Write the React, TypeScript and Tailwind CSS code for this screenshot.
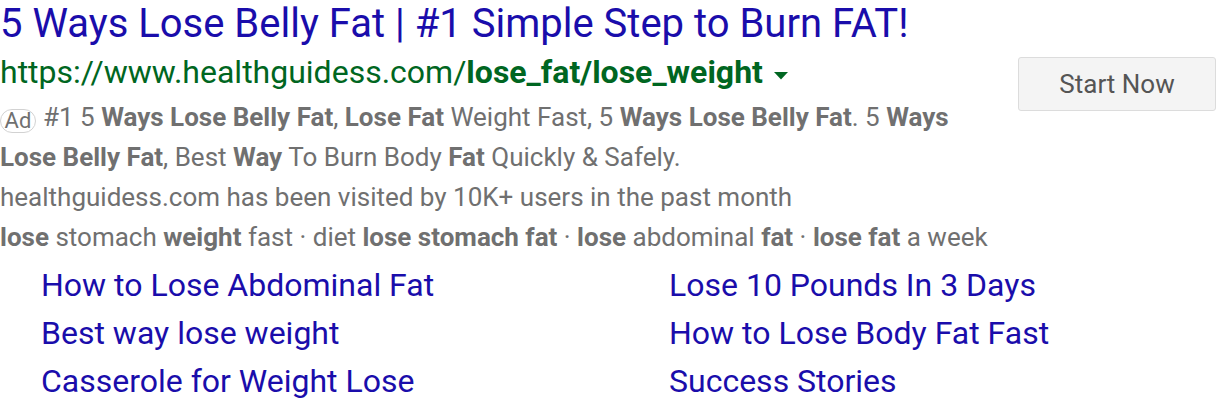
export default function App() {
  const sitelinks = [
    'How to Lose Abdominal Fat',
    'Lose 10 Pounds In 3 Days',
    'Best way lose weight',
    'How to Lose Body Fat Fast',
    'Casserole for Weight Lose',
    'Success Stories',
  ]

  return (
    <div className="w-[1216px] h-[410px] overflow-hidden bg-white font-['Roboto',sans-serif]">
      <div className="flex items-start">
        <div className="flex-1">
          <h1 className="pt-[2px] text-[40px] leading-[44px] text-[#1a0dab] whitespace-nowrap">
            5 Ways Lose Belly Fat | #1 Simple Step to Burn FAT!
          </h1>
          <div className="flex items-center h-[40px] mt-[6px] text-[32px] text-[#006621] whitespace-nowrap">
            <span>https://www.healthguidess.com/</span>
            <span className="font-bold">lose_fat/lose_weight</span>
            <svg className="ml-[11px] mt-[8px]" width="14" height="8" viewBox="0 0 14 8">
              <path d="M0 0 L14 0 L7 7.5 Z" fill="#006621" />
            </svg>
          </div>
        </div>
        <button className="mt-[57px] mb-[-19px] w-[198px] h-[54px] rounded-[3px] border border-[#dcdcdc] bg-[#f4f4f4] text-[26px] text-[#555555]">
          Start Now
        </button>
      </div>

      <div className="mt-[5px] w-[980px] text-[26px] leading-[40px] text-[#707070]">
        <p>
          <span className="inline-flex items-center justify-center align-[-2px] w-[36px] h-[24px] mr-[7px] rounded-[12px] border border-[#d2d2d2] text-[22px] leading-none">
            Ad
          </span>
          #1 5 <b>Ways Lose Belly Fat</b>, <b>Lose Fat</b> Weight Fast, 5 <b>Ways Lose Belly Fat</b>. 5{' '}
          <b>Ways</b> <b>Lose Belly Fat</b>, Best <b>Way</b> To Burn Body <b>Fat</b> Quickly &amp; Safely.
        </p>
        <p>healthguidess.com has been visited by 10K+ users in the past month</p>
        <p className="whitespace-nowrap">
          <b>lose</b> stomach <b>weight</b> fast · diet <b>lose stomach fat</b> · <b>lose</b> abdominal{' '}
          <b>fat</b> · <b>lose fat</b> a week
        </p>
      </div>

      <div className="mt-[4px] pl-[41px] grid grid-cols-[628px_1fr] text-[32px] leading-[48px] text-[#1a0dab]">
        {sitelinks.map((s) => (
          <a key={s} className="whitespace-nowrap">
            {s}
          </a>
        ))}
      </div>
    </div>
  )
}
